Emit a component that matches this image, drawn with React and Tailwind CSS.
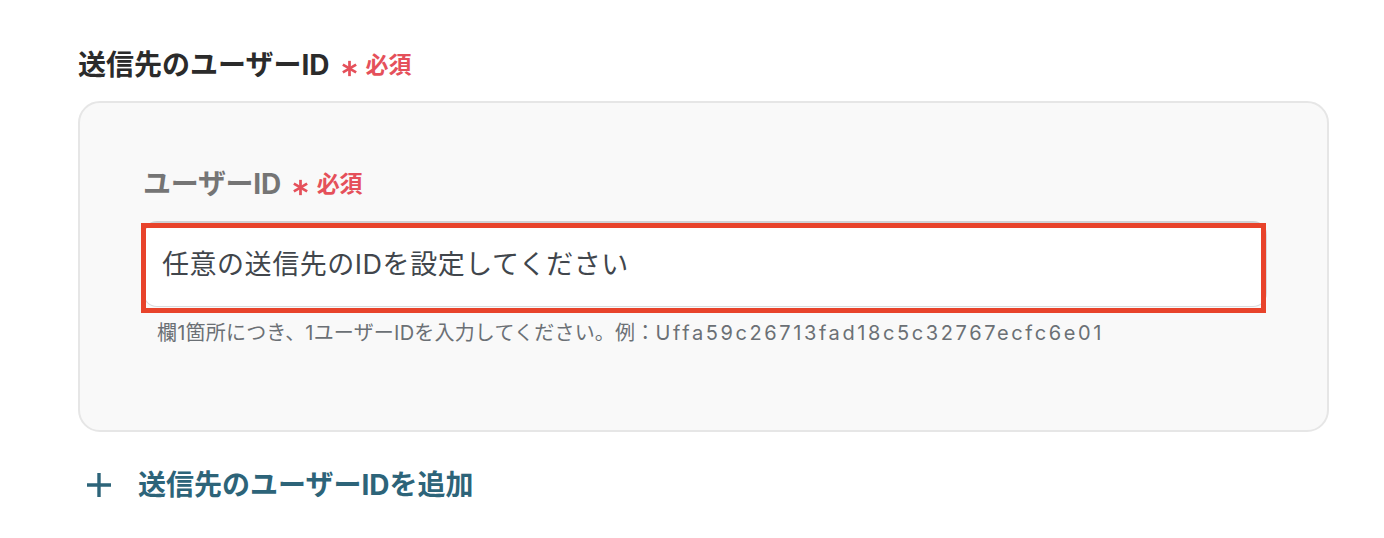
const FONT = { fontFamily: 'Inter, "Noto Sans CJK JP", "Noto Sans", sans-serif' };

function Star() {
  // six-spoke required mark
  return (
    <svg width="17" height="17" viewBox="0 0 20 20" className="translate-y-[3px]">
      <g stroke="currentColor" strokeWidth="3.2" strokeLinecap="butt">
        <path d="M10 1v18" />
        <path d="M2.2 5.5l15.6 9" />
        <path d="M2.2 14.5l15.6-9" />
      </g>
    </svg>
  );
}

function Required() {
  return (
    <span className="ml-[11px] inline-flex items-center text-[#e5505a]">
      <Star />
      <span className="ml-[8px] text-[23px] font-bold">必須</span>
    </span>
  );
}

export default function App() {
  return (
    <div className="w-[1384px] h-[538px] bg-white" style={FONT}>
      <div className="pl-[78px] pr-[55px] pt-[48px]">
        {/* Field heading */}
        <div className="flex items-center h-[34px] text-[28px] font-bold text-[#2b2b2b]">
          送信先のユーザーID
          <Required />
        </div>

        {/* Panel */}
        <div className="mt-[19px] h-[331px] rounded-[22px] border-2 border-[#e6e6e6] bg-[#f9f9f9] pl-[63px] pr-[60px] pt-[64px]">
          <div className="flex items-center h-[34px] text-[28px] font-bold text-[#757575] tracking-[-0.01em]">
            ユーザーID
            <Required />
          </div>

          <div className="relative mt-[20px]">
            <div className="h-[86px] rounded-[14px] border border-[#d9dbde] border-t-[3px] border-t-[#cfd1d4] bg-white pl-[18px] flex items-center text-[27px] text-[#41464c] tracking-[0.02em]">
              任意の送信先のIDを設定してください
            </div>
            {/* annotation frame */}
            <div className="absolute left-[-2px] right-[1px] top-[2px] h-[90px] border-[5px] border-[#e8432b] pointer-events-none" />
          </div>

          <p className="mt-[12px] pl-[14px] text-[20px] leading-[28px] text-[#6b7075]">
            <span className="tracking-[0.01em]">欄1箇所につき、1ユーザーIDを入力してください。例：</span>
            <span className="tracking-[0.13em]">Uffa59c26713fad18c5c32767ecfc6e01</span>
          </p>
        </div>

        {/* Add row */}
        <button className="mt-[36px] h-[34px] flex items-center text-[#2d6479]">
          <svg width="26" height="26" viewBox="0 0 26 26" className="ml-[8px]">
            <path d="M13 1v24M1 13h24" stroke="currentColor" strokeWidth="3.4" />
          </svg>
          <span className="ml-[26px] text-[28px] font-bold">送信先のユーザーIDを追加</span>
        </button>
      </div>
    </div>
  );
}
